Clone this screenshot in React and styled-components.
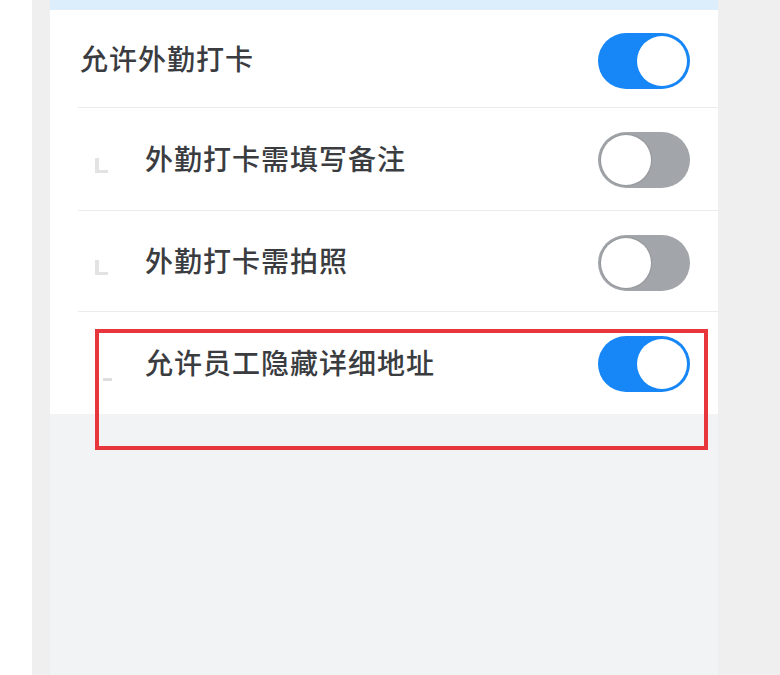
import React from "react";
import styled, { createGlobalStyle } from "styled-components";

const Global = createGlobalStyle`
  html, body { margin: 0; padding: 0; background: #ffffff; }
  body { font-family: "Noto Sans CJK SC", "Noto Sans", sans-serif; }
  * { box-sizing: border-box; }
`;

const Page = styled.div`
  display: flex;
  width: 780px;
  height: 675px;
  overflow: hidden;
  background: #ffffff;
`;

const WhiteMargin = styled.div`
  width: 32px;
  flex: none;
  background: #ffffff;
`;

const Gutter = styled.div`
  width: ${(p) => p.$w}px;
  flex: none;
  background: #efefef;
`;

const Phone = styled.div`
  position: relative;
  width: 668px;
  flex: none;
  display: flex;
  flex-direction: column;
  background: #f2f3f5;
`;

const TopBand = styled.div`
  height: 10px;
  background: #dcedfc;
`;

const List = styled.div`
  background: #ffffff;
  display: flex;
  flex-direction: column;
`;

const Row = styled.div`
  display: flex;
  align-items: center;
  height: ${(p) => p.$h}px;
  padding-top: ${(p) => p.$pt}px;
  margin-left: 28px;
  padding-right: 28px;
  border-bottom: ${(p) => (p.$last ? "none" : "1px solid #ebebeb")};
`;

const Corner = styled.span`
  flex: none;
  width: 13px;
  height: 15px;
  margin-left: 17px;
  margin-right: 37px;
  margin-top: 10px;
  border-left: ${(p) => (p.$faded ? "0" : "4px solid #e3e3e3")};
  border-bottom: 3px solid #e3e3e3;
  ${(p) => p.$faded && "border-bottom-color: #dedede; width: 9px; margin-left: 25px; margin-right: 33px; margin-top: 18px;"}
`;

const Label = styled.span`
  flex: 1;
  margin-left: ${(p) => (p.$main ? 2 : 0)}px;
  margin-top: -5px;
  font-size: 28px;
  font-weight: 500;
  letter-spacing: 1px;
  color: #3a3c3f;
  line-height: 1;
  white-space: nowrap;
`;

const Switch = styled.span`
  position: relative;
  flex: none;
  width: 92px;
  height: 56px;
  border-radius: 28px;
  background: ${(p) => (p.$on ? "#1787f7" : "#a2a5a9")};
  display: flex;
  align-items: center;
  justify-content: ${(p) => (p.$on ? "flex-end" : "flex-start")};
  padding: 3px;
`;

const Knob = styled.span`
  width: 50px;
  height: 50px;
  border-radius: 50%;
  background: #ffffff;
  box-shadow: 0 0 1px 1px ${(p) => (p.$on ? "rgba(23,135,247,0.6)" : "rgba(140,143,147,0.6)")};
`;

const Filler = styled.div`
  flex: 1;
  background: #f2f3f5;
`;

const Highlight = styled.div`
  position: absolute;
  left: 45px;
  top: 329px;
  width: 613px;
  height: 121px;
  border: 4px solid #e8363d;
  pointer-events: none;
`;

const rows = [
  { label: "允许外勤打卡", on: true, main: true, h: 98, pt: 4 },
  { label: "外勤打卡需填写备注", on: false, h: 103, pt: 2 },
  { label: "外勤打卡需拍照", on: false, h: 101, pt: 3 },
  { label: "允许员工隐藏详细地址", on: true, h: 102, pt: 2, faded: true, last: true },
];

export default function App() {
  return (
    <>
      <Global />
      <Page>
        <WhiteMargin />
        <Gutter $w={18} />
        <Phone>
          <TopBand />
          <List>
            {rows.map((r) => (
              <Row key={r.label} $h={r.h} $pt={r.pt} $last={r.last}>
                {!r.main && <Corner $faded={r.faded} />}
                <Label $main={r.main}>{r.label}</Label>
                <Switch $on={r.on}>
                  <Knob $on={r.on} />
                </Switch>
              </Row>
            ))}
          </List>
          <Filler />
          <Highlight />
        </Phone>
        <Gutter $w={62} />
      </Page>
    </>
  );
}
